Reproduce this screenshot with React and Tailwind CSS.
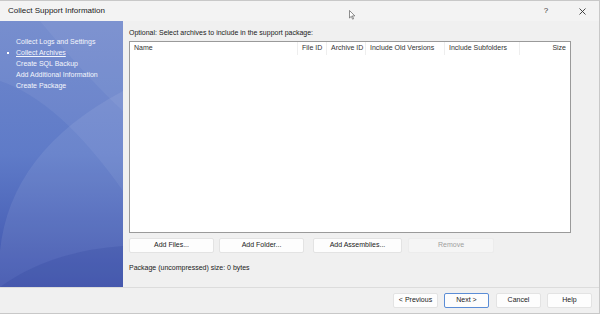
import React from "react"

const font = { fontFamily: "'Liberation Sans', Arial, sans-serif" }

const steps = ["Collect Logs and Settings", "Collect Archives", "Create SQL Backup", "Add Additional Information", "Create Package"]

const columns = [
    { label: "Name", w: "w-[168px]" },
    { label: "File ID", w: "w-[29px]" },
    { label: "Archive ID", w: "w-[39px]" },
    { label: "Include Old Versions", w: "w-[79px]" },
    { label: "Include Subfolders", w: "w-[75px]" },
]

function Btn({ children, disabled, focused, className }) {
    return (
        <div className={"h-[15px] flex items-center justify-center rounded-[2px] text-[7px] whitespace-nowrap " +
            (disabled ? "bg-[#f5f5f5] text-[#a0a0a0] border border-[#ececec] " : "bg-[#fdfdfd] text-[#1a1a1a] border border-[#e3e3e3] ") +
            (focused ? "!border-[#5b8dd6] " : "") + className}>
            {children}
        </div>
    )
}

function SidePanel() {
    return (
        <div className="relative w-[123px] h-full overflow-hidden bg-gradient-to-b from-[#6f87cb] via-[#5f7bc8] to-[#3f53ad]">
            <svg className="absolute inset-0" width="123" height="266" viewBox="0 0 123 266">
                <path d="M0 60 Q60 80 123 170 L123 0 L0 0 Z" fill="#ffffff" opacity="0.06" />
                <path d="M0 230 Q10 130 123 70 L123 266 L0 266 Z" fill="#ffffff" opacity="0.08" />
                <path d="M0 266 Q50 230 123 225 L123 266 Z" fill="#1e2f8f" opacity="0.15" />
                <path d="M40 0 Q90 60 123 90 L123 0 Z" fill="#ffffff" opacity="0.05" />
            </svg>
            <div className="relative pt-[15px] flex flex-col" style={font}>
                {steps.map((s, i) => (
                    <div key={s} className="relative h-[11px] pl-[16px] flex items-center text-[7px] text-[#f4f6fc] leading-none whitespace-nowrap">
                        {i === 1 && <span className="absolute left-[7px] top-[5px] w-[2px] h-[2px] bg-white"></span>}
                        <span className={i === 1 ? "underline" : ""}>{s}</span>
                    </div>
                ))}
            </div>
        </div>
    )
}

export default function App() {
    return (
        <div className="w-[600px] h-[314px] bg-[#f0f0f0] flex flex-col border-r border-b border-t border-[#c8c8c8] overflow-hidden">
            <div className="h-[20px] bg-[#f3f3f3] flex items-center pl-[8px] relative shrink-0">
                <span className="text-[8px] text-[#1a1a1a]" style={{ fontFamily: "'Liberation Sans', Arial, sans-serif" }}>Collect Support Information</span>
                <div className="ml-auto flex items-center h-full">
                    <span className="w-[30px] text-center text-[8px] text-[#333]" style={font}>?</span>
                    <svg className="ml-[18px] mr-[13px]" width="7" height="7" viewBox="0 0 7 7">
                        <path d="M0.5 0.5 L6.5 6.5 M6.5 0.5 L0.5 6.5" stroke="#333" strokeWidth="0.9" />
                    </svg>
                </div>
                <svg className="absolute left-[349px] top-[9px]" width="7" height="10" viewBox="0 0 7 10">
                    <path d="M0.5 0.5 L0.5 8 L2.3 6.3 L3.6 9.2 L4.6 8.7 L3.4 5.9 L5.8 5.9 Z" fill="#fff" stroke="#444" strokeWidth="0.6" />
                </svg>
            </div>
            <div className="flex h-[266px] shrink-0">
                <SidePanel />
                <div className="flex-1 pl-[6px] pr-[28px] pt-[8px] flex flex-col" style={font}>
                    <div className="text-[7px] text-[#1a1a1a] leading-none h-[12px] whitespace-nowrap">Optional: Select archives to include in the support package:</div>
                    <div className="h-[192px] bg-white border border-[#9a9a9a]">
                        <div className="flex h-[13px] items-center text-[7px] text-[#333] whitespace-nowrap">
                            {columns.map(c => (
                                <div key={c.label} className={c.w + " h-full flex items-center pl-[4px] border-r border-[#eeeeee]"}>{c.label}</div>
                            ))}
                            <div className="flex-1 text-right pr-[4px]">Size</div>
                        </div>
                    </div>
                    <div className="flex mt-[5px] gap-[5px]">
                        <Btn className="w-[85px]">Add Files...</Btn>
                        <Btn className="w-[85px]">Add Folder...</Btn>
                        <Btn className="w-[89px] ml-[4px]">Add Assemblies...</Btn>
                        <Btn disabled className="w-[86px] ml-[1px]">Remove</Btn>
                    </div>
                    <div className="mt-[10px] text-[7px] text-[#1a1a1a] whitespace-nowrap">Package (uncompressed) size: 0 bytes</div>
                </div>
            </div>
            <div className="flex-1 border-t border-[#dcdcdc] flex items-center justify-end pr-[7px] gap-[6px]" style={font}>
                <Btn className="w-[45px]">&lt; Previous</Btn>
                <Btn focused className="w-[45px]">Next &gt;</Btn>
                <Btn className="w-[45px] ml-[1px]">Cancel</Btn>
                <Btn className="w-[45px]">Help</Btn>
            </div>
        </div>
    )
}
